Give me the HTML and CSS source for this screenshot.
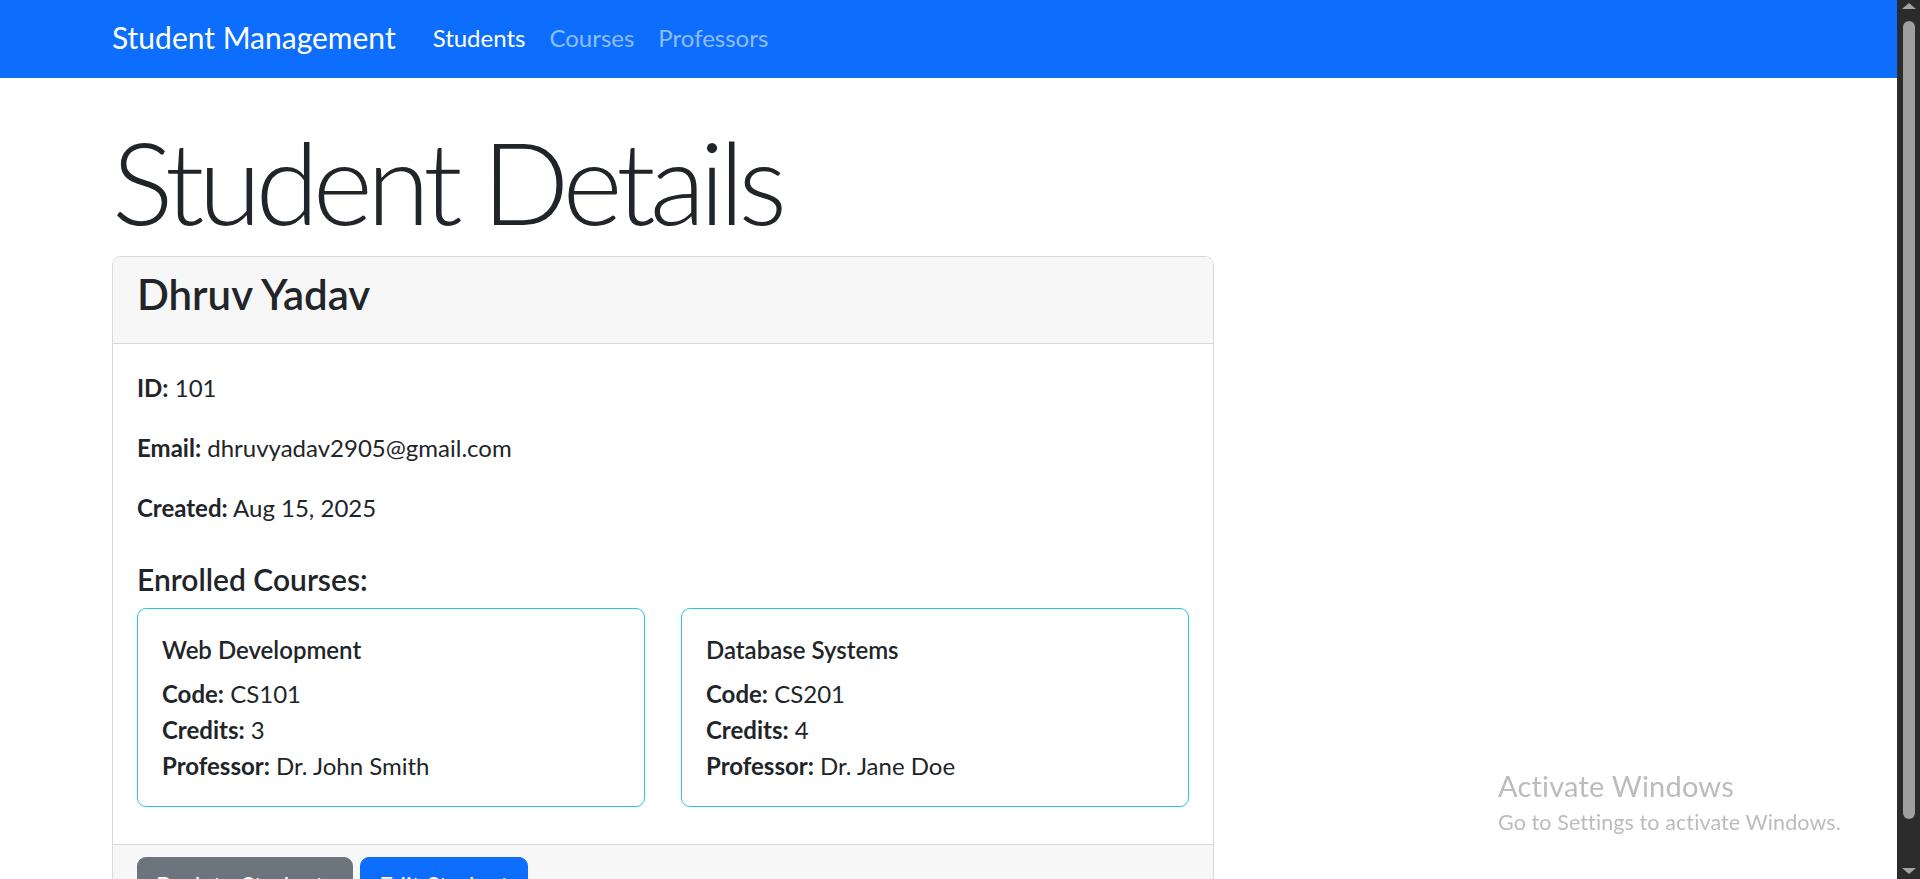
FILE: index.html
```html
<!DOCTYPE html>
<html lang="en">
<head>
<meta charset="utf-8">
<title>Student Details</title>
<link rel="stylesheet" href="styles.css">
</head>
<body>
<div class="screen">
  <div class="page">
    <nav class="navbar">
      <a class="brand" href="#">Student Management</a>
      <ul class="nav">
        <li><a class="nav-link active" href="#">Students</a></li>
        <li><a class="nav-link" href="#">Courses</a></li>
        <li><a class="nav-link" href="#">Professors</a></li>
      </ul>
    </nav>
    <main class="container">
      <h1 class="display">Student Details</h1>
      <div class="card">
        <div class="card-header">
          <h3 class="student-name">Dhruv Yadav</h3>
        </div>
        <div class="card-body">
          <p class="info"><strong>ID:</strong> 101</p>
          <p class="info"><strong>Email:</strong> dhruvyadav2905@gmail.com</p>
          <p class="info"><strong>Created:</strong> Aug 15, 2025</p>
          <h5 class="section-title">Enrolled Courses:</h5>
          <div class="course-row">
            <div class="course-card">
              <h6 class="course-title">Web Development</h6>
              <p class="course-text"><strong>Code:</strong> CS101<br><strong>Credits:</strong> 3<br><strong>Professor:</strong> Dr. John Smith</p>
            </div>
            <div class="course-card">
              <h6 class="course-title">Database Systems</h6>
              <p class="course-text"><strong>Code:</strong> CS201<br><strong>Credits:</strong> 4<br><strong>Professor:</strong> Dr. Jane Doe</p>
            </div>
          </div>
        </div>
        <div class="card-footer">
          <a class="btn btn-secondary" href="#">Back to Students</a>
          <a class="btn btn-primary" href="#">Edit Student</a>
        </div>
      </div>
    </main>
  </div>
  <div class="scrollbar">
    <span class="arrow arrow-up"></span>
    <div class="thumb"></div>
    <span class="arrow arrow-down"></span>
  </div>
</div>
<div class="watermark">
  <div class="wm-title">Activate Windows</div>
  <div class="wm-sub">Go to Settings to activate Windows.</div>
</div>
</body>
</html>
```
FILE: styles.css
```css
* { box-sizing: border-box; }
html, body { margin: 0; padding: 0; }
body {
  width: 1920px;
  height: 879px;
  overflow: hidden;
  background: #fff;
  color: #212529;
  font-family: Lato, "Noto Sans", sans-serif;
  font-size: 24px;
  line-height: 36px;
}
a { text-decoration: none; }

.screen {
  display: flex;
  width: 1920px;
  height: 879px;
}
.page {
  width: 1897px;
  height: 879px;
  overflow: hidden;
}

/* navbar */
.navbar {
  height: 78px;
  background: #0d6efd;
  display: flex;
  align-items: center;
  padding-left: 112px;
  padding-bottom: 3px;
}
.brand {
  color: #fff;
  font-size: 30px;
  line-height: 45px;
  margin-right: 25px;
}
.nav {
  display: flex;
  list-style: none;
  margin: 0;
  padding: 0;
}
.nav-link {
  display: block;
  padding: 0 12px;
  font-size: 24px;
  line-height: 36px;
  color: rgba(255, 255, 255, 0.55);
}
.nav-link.active { color: #fff; }

/* content */
.container {
  padding: 34px 0 0 112px;
}
.display {
  margin: 0 0 8px;
  font-size: 115px;
  line-height: 136px;
  font-weight: 300;
  letter-spacing: -6px;
}
.card {
  width: 1102px;
  border: 1px solid #d9d9d9;
  border-radius: 9px;
  overflow: hidden;
}
.card-header {
  background: #f7f7f7;
  border-bottom: 1px solid #d9d9d9;
  padding: 12px 24px;
}
.student-name {
  margin: 0 0 12px;
  font-size: 42px;
  line-height: 50px;
  font-weight: 600;
}
.card-body {
  padding: 26px 24px 24px;
}
.info {
  margin: 0 0 24px;
}
strong { font-weight: 700; }
.section-title {
  margin: 35px 0 11px;
  font-size: 30px;
  line-height: 36px;
  font-weight: 600;
}
.course-row {
  display: flex;
  gap: 36px;
  margin-bottom: 13px;
}
.course-card {
  width: 508px;
  border: 1px solid #2ec4de;
  border-radius: 9px;
  padding: 27px 24px 22px;
}
.course-title {
  margin: 0 0 12px;
  font-size: 24px;
  line-height: 28px;
  font-weight: 600;
}
.course-text {
  margin: 0;
}
.card-footer {
  background: #f7f7f7;
  border-top: 1px solid #d9d9d9;
  padding: 12px 24px;
  display: flex;
  gap: 7px;
}
.btn {
  display: inline-block;
  padding: 9px 18px;
  border: 1px solid transparent;
  border-radius: 9px;
  color: #fff;
  font-size: 24px;
  line-height: 36px;
}
.btn-secondary { background: #6c757d; border-color: #6c757d; }
.btn-primary { background: #0d6efd; border-color: #0d6efd; }

/* fake scrollbar */
.scrollbar {
  width: 23px;
  height: 879px;
  background: #2b2b2b;
  display: flex;
  flex-direction: column;
  align-items: center;
}
.arrow {
  width: 0;
  height: 0;
  border-left: 7px solid transparent;
  border-right: 7px solid transparent;
}
.arrow-up {
  margin-top: 3px;
  border-bottom: 6px solid #a3a3a3;
}
.arrow-down {
  margin-top: 49px;
  border-top: 6px solid #a3a3a3;
}
.thumb {
  width: 12px;
  height: 798px;
  margin-top: 12px;
  border-radius: 6px;
  background: #9f9f9f;
}

/* windows watermark */
.watermark {
  position: fixed;
  left: 1498px;
  top: 769px;
  color: #bcbcbc;
  pointer-events: none;
}
.wm-title {
  font-size: 29px;
  line-height: 34px;
  letter-spacing: 0.2px;
}
.wm-sub {
  margin-top: 6px;
  font-size: 21.5px;
  line-height: 26px;
  letter-spacing: 0.1px;
}
```
